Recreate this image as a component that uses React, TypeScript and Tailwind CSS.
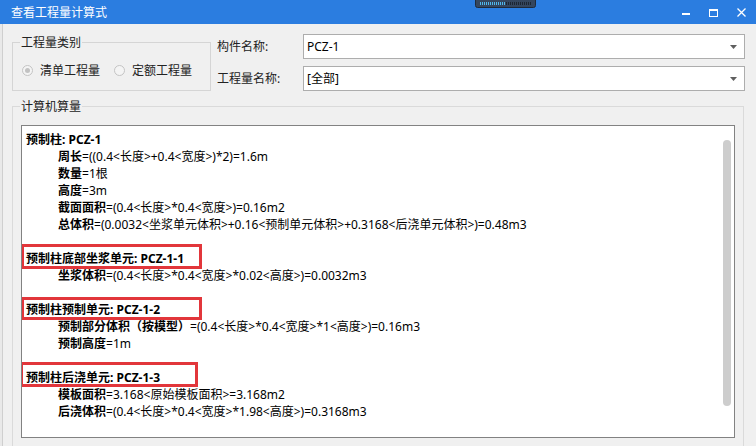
import React from 'react';

// 查看工程量计算式 dialog

type Line = [string, string];

interface Section {
  head: string;
  lines: Line[];
  box?: string;
}

const SECTIONS: Section[] = [
  {
    head: '预制柱: PCZ-1',
    lines: [
      ['周长', '=((0.4<长度>+0.4<宽度>)*2)=1.6m'],
      ['数量', '=1根'],
      ['高度', '=3m'],
      ['截面面积', '=(0.4<长度>*0.4<宽度>)=0.16m2'],
      ['总体积', '=(0.0032<坐浆单元体积>+0.16<预制单元体积>+0.3168<后浇单元体积>)=0.48m3'],
    ],
  },
  {
    head: '预制柱底部坐浆单元: PCZ-1-1',
    box: 'absolute left-[-5px] top-[-6px] w-[181px] h-[25px] border-[3px] border-[#e2363b]',
    lines: [['坐浆体积', '=(0.4<长度>*0.4<宽度>*0.02<高度>)=0.0032m3']],
  },
  {
    head: '预制柱预制单元: PCZ-1-2',
    box: 'absolute left-[-5px] top-[-4px] w-[181px] h-[23px] border-[3px] border-[#e2363b]',
    lines: [
      ['预制部分体积（按模型）', '=(0.4<长度>*0.4<宽度>*1<高度>)=0.16m3'],
      ['预制高度', '=1m'],
    ],
  },
  {
    head: '预制柱后浇单元: PCZ-1-3',
    box: 'absolute left-[-6px] top-[-7px] w-[178px] h-[25px] border-[3px] border-[#e2363b]',
    lines: [
      ['模板面积', '=3.168<原始模板面积>=3.168m2'],
      ['后浇体积', '=(0.4<长度>*0.4<宽度>*1.98<高度>)=0.3168m3'],
    ],
  },
];

const Radio = ({ checked, label }: { checked?: boolean; label: string }) => (
  <div className="flex items-center">
    <span className="w-[11px] h-[11px] rounded-full border border-[#c4c4c4] bg-[#f4f4f4] flex items-center justify-center">
      {checked && <span className="w-[5px] h-[5px] rounded-full bg-[#c2c2c2]" />}
    </span>
    <span className="ml-[7px] text-[#222]">{label}</span>
  </div>
);

const Combo = ({ value }: { value: string }) => (
  <div className="w-[442px] h-[25px] bg-white border border-[#adadad] flex items-center pl-[3px] pr-[7px]">
    <span className="flex-1 text-black">{value}</span>
    <svg width="7" height="4" viewBox="0 0 7 4">
      <path d="M0 0h7L3.5 4z" fill="#5f5f5f" />
    </svg>
  </div>
);

export default function App() {
  return (
    <div
      className="w-[756px] h-[446px] overflow-hidden flex flex-col text-[12px] leading-[17px] text-black"
      style={{ fontFamily: '"Noto Sans", "Noto Sans CJK SC", sans-serif' }}
    >
      {/* title bar */}
      <div className="relative h-[24px] shrink-0 bg-[#2b7de0] flex items-center pl-[11px] pr-[10px] text-white">
        <span className="text-[12px]">查看工程量计算式</span>
        <div className="flex-1" />
        <svg width="8" height="3" viewBox="0 0 8 3" className="mt-[4px]">
          <rect x="0" y="0" width="8" height="2" fill="#fff" />
        </svg>
        <svg width="9" height="8" viewBox="0 0 9 8" className="ml-[19px] mt-[1px]">
          <rect x="0.5" y="0.5" width="8" height="7" fill="none" stroke="#fff" />
          <rect x="0" y="0" width="9" height="2" fill="#fff" />
        </svg>
        <svg width="9" height="9" viewBox="0 0 9 9" className="ml-[19px]">
          <path d="M0.5 0.5L8.5 8.5M8.5 0.5L0.5 8.5" stroke="#fff" strokeWidth="1.3" />
        </svg>
        {/* overlapping widget from another app */}
        <svg width="61" height="8" viewBox="0 0 61 8" className="absolute left-[475px] top-0">
          <rect x="0.5" y="-3" width="60" height="10.5" rx="2" fill="#34465e" stroke="#1e2a3a" />
          {Array.from({ length: 26 }).map((_, i) => (
            <rect key={i} x={5 + i * 2} y="2" width="1" height="3" fill={i < 13 ? '#4fb6ea' : '#1c2633'} />
          ))}
        </svg>
      </div>

      <div className="flex-1 flex min-h-0">
        {/* sliver of the window behind */}
        <div className="w-[3px] bg-[#e9e9e9] border-r border-[#cfcfcf]" />

        <div className="flex-1 bg-[#f0f0f0] pt-[10px]">
          <div className="flex items-start">
            <fieldset className="ml-[9px] w-[199px] h-[57px] border border-[#d5d5d5] pl-[7px]">
              <legend className="px-[1px] text-[#222]">工程量类别</legend>
              <div className="flex items-center gap-[14px] ml-[2px] mt-[11px]">
                <Radio checked label="清单工程量" />
                <Radio label="定额工程量" />
              </div>
            </fieldset>

            <div className="ml-[6px] flex flex-col gap-[7px]">
              <div className="flex items-center h-[25px]">
                <span className="w-[86px] text-[#222]">构件名称:</span>
                <Combo value="PCZ-1" />
              </div>
              <div className="flex items-center h-[25px]">
                <span className="w-[86px] text-[#222]">工程量名称:</span>
                <Combo value="[全部]" />
              </div>
            </div>
          </div>

          <fieldset className="ml-[9px] mt-[7px] w-[732px] h-[360px] border border-[#dadada] pl-[7px]">
            <legend className="px-[1px] text-[#222]">计算机算量</legend>
            <div className="ml-[1px] mt-[10px] w-[714px] h-[313px] bg-white border border-[#828282] flex">
              <div className="flex-1 min-w-0 overflow-hidden whitespace-nowrap pl-[4px] pt-[5px]">
                {SECTIONS.map((s, i) => (
                  <div key={i} className={i > 0 ? 'mt-[17px]' : ''}>
                    <div className="relative font-bold">
                      {s.head}
                      {s.box && <span className={s.box} />}
                    </div>
                    {s.lines.map(([k, v], j) => (
                      <div key={j} className="pl-[32px]">
                        <span className="font-bold">{k}</span>
                        <span>{v}</span>
                      </div>
                    ))}
                  </div>
                ))}
              </div>
              <div className="w-[8px] mr-[3px] mt-[14px] h-[266px] rounded-full bg-[#cdcdcd]" />
            </div>
          </fieldset>
        </div>
      </div>
    </div>
  );
}
